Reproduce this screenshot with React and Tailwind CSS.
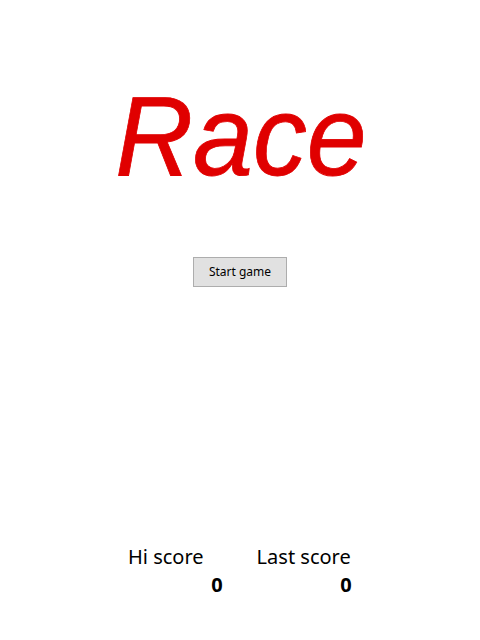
export default function App() {
  return (
    <div className="w-[480px] h-[640px] bg-white relative overflow-hidden" style={{fontFamily: '"Noto Sans", sans-serif'}}>
      <div className="flex flex-col items-center">
        <div className="mt-[71px] h-[130px] text-[#e00000] italic text-[114px] leading-[130px] pl-[2px] scale-x-[0.945] [-webkit-text-stroke:0.8px_#e00000]" style={{fontFamily: '"Liberation Sans", Arial, sans-serif'}}>Race</div>
        <button className="mt-[56px] w-[94px] h-[30px] bg-[#e1e1e1] border border-[#adadad] text-[12px] text-black leading-none" style={{fontFamily: '"Noto Sans", sans-serif'}}>Start game</button>
      </div>
      <div className="absolute left-[128px] top-[543px] flex gap-[53px] text-[20px] text-black">
        <div className="flex flex-col items-end">
          <div className="leading-[28px]">Hi score</div>
          <div className="leading-[28px] font-bold -mr-[19px]">0</div>
        </div>
        <div className="flex flex-col items-end">
          <div className="leading-[28px]">Last score</div>
          <div className="leading-[28px] font-bold -mr-[1px]">0</div>
        </div>
      </div>
    </div>
  );
}
